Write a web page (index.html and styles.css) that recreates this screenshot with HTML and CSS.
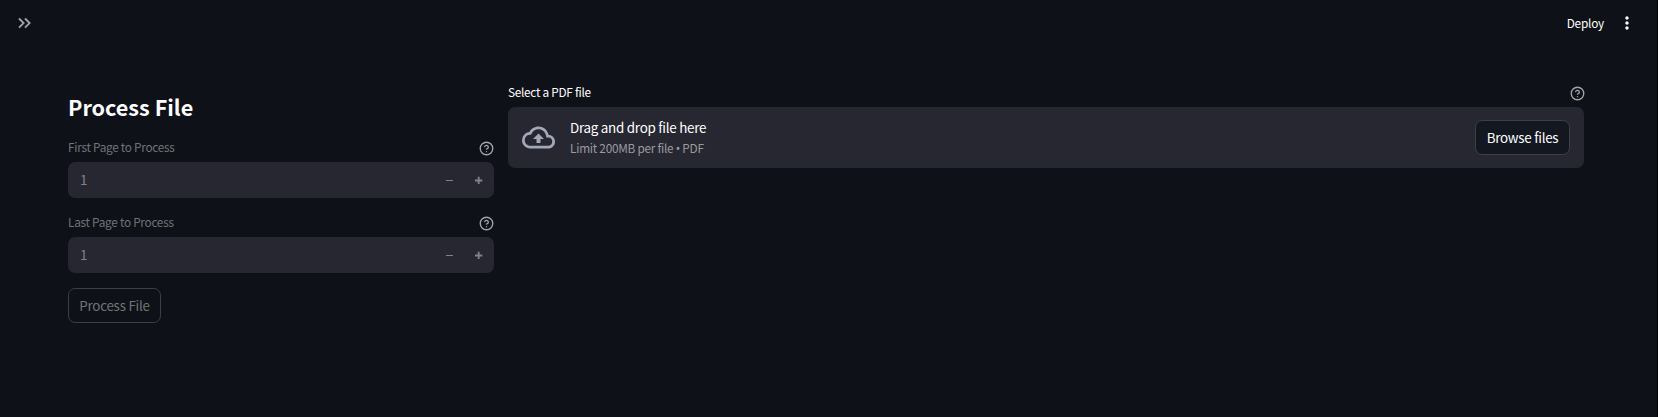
FILE: index.html
```html
<!DOCTYPE html>
<html lang="en">
<head>
<meta charset="utf-8">
<title>Process File</title>
<link rel="stylesheet" href="styles.css">
</head>
<body>
<svg class="defs" aria-hidden="true">
  <symbol id="help" viewBox="0 0 24 24"><g fill="none" stroke="currentColor" stroke-width="2.2" stroke-linecap="round" stroke-linejoin="round"><circle cx="12" cy="12" r="10"/><path d="M9.09 9a3 3 0 0 1 5.83 1c0 2-3 3-3 3M12 17h.01"/></g></symbol>
  <symbol id="minus" viewBox="0 0 8 8"><path fill="currentColor" d="M0 4v1h7V4z"/></symbol>
  <symbol id="plus" viewBox="0 0 8 8"><path fill="currentColor" d="M2.8 0.8v2.8H0v1.8h2.8v2.6h1.8V5.4h2.7V3.6H4.6V.8z"/></symbol>
</svg>
<header class="toolbar">
  <svg class="expand" viewBox="0 0 20 20"><path fill="none" stroke="currentColor" stroke-width="1.9" d="M5 5.5 9.6 10.1 5 14.7M11 5.5l4.6 4.6-4.6 4.6"/></svg>
  <div class="actions">
    <span class="deploy">Deploy</span>
    <svg class="kebab" viewBox="0 0 24 24"><path fill="currentColor" d="M12 8c1.1 0 2-.9 2-2s-.9-2-2-2-2 .9-2 2 .9 2 2 2zm0 2c-1.1 0-2 .9-2 2s.9 2 2 2 2-.9 2-2-.9-2-2-2zm0 6c-1.1 0-2 .9-2 2s.9 2 2 2 2-.9 2-2-.9-2-2-2z"/></svg>
  </div>
</header>
<main class="columns">
  <section class="settings">
    <h1 class="title">Process File</h1>
    <div class="field">
      <div class="label muted"><span>First Page to Process</span><svg class="help"><use href="#help"/></svg></div>
      <div class="number"><span class="value">1</span><svg class="step"><use href="#minus"/></svg><svg class="step"><use href="#plus"/></svg></div>
    </div>
    <div class="field">
      <div class="label muted"><span>Last Page to Process</span><svg class="help"><use href="#help"/></svg></div>
      <div class="number"><span class="value">1</span><svg class="step"><use href="#minus"/></svg><svg class="step"><use href="#plus"/></svg></div>
    </div>
    <button class="button process" disabled>Process File</button>
  </section>
  <section class="upload">
    <div class="label"><span>Select a PDF file</span><svg class="help"><use href="#help"/></svg></div>
    <div class="dropzone">
      <svg class="cloud" viewBox="0 0 24 24"><path fill="currentColor" d="M19.35 10.04A7.49 7.49 0 0 0 12 4C9.11 4 6.6 5.64 5.35 8.04A5.994 5.994 0 0 0 0 14c0 3.31 2.69 6 6 6h13c2.76 0 5-2.24 5-5 0-2.64-2.05-4.78-4.65-4.96zM19 18H6c-2.21 0-4-1.79-4-4 0-2.05 1.53-3.76 3.56-3.97l1.07-.11.5-.95A5.469 5.469 0 0 1 12 6c2.62 0 4.88 1.86 5.39 4.43l.3 1.5 1.53.11A2.98 2.98 0 0 1 22 15c0 1.65-1.35 3-3 3zM8 13h2.55v3h2.9v-3H16l-4-4z"/></svg>
      <div class="instructions"><span class="prompt">Drag and drop file here</span><span class="limit">Limit 200MB per file <span class="bullet">•</span> PDF</span></div>
      <button class="button browse">Browse files</button>
    </div>
  </section>
</main>
</body>
</html>
```

FILE: styles.css
```css
* { box-sizing: border-box; }
body {
  margin: 0;
  height: 417px;
  overflow: hidden;
  background: #0e1117;
  border-right: 1px solid #000;
  color: #fff;
  font: 13.4px/22px "Noto Sans CJK SC", "Noto Sans", sans-serif;
  letter-spacing: -0.26px;
}
.defs { display: none; }
svg { display: block; flex: none; }
.toolbar {
  display: flex;
  justify-content: space-between;
  height: 86px;
  padding: 13px 20px 0 14px;
}
.expand { width: 20px; height: 20px; color: #a3a4a7; }
.actions { display: flex; gap: 13px; height: 20px; align-items: center; }
.deploy { font-size: 11.8px; line-height: 20px; letter-spacing: -0.2px; }
.kebab { width: 20px; height: 20px; }
.columns {
  display: grid;
  grid-template-columns: 426px 1076px;
  column-gap: 14px;
  padding-left: 68px;
}
.title {
  margin: 4px 0 17px;
  font-size: 21.6px;
  line-height: 34px;
  font-weight: 700;
  letter-spacing: 0;
}
.field { margin-bottom: 18px; }
.field:nth-of-type(2) { margin-bottom: 15px; }
.label {
  display: flex;
  align-items: center;
  justify-content: space-between;
  height: 14px;
  margin-bottom: 7px;
  font-size: 11.8px;
  line-height: 14px;
  letter-spacing: -0.27px;
}
.label span { padding-bottom: 2px; }
.muted { color: #727377; }
.help { width: 15px; height: 15px; color: #a3a4a7; }
.upload .help { margin-right: -1px; }
.settings .help { margin-right: 0.4px; }
.number {
  display: flex;
  align-items: center;
  height: 36px;
  padding: 0 11px 0 12px;
  border-radius: 7.2px;
  background: #262730;
  color: #80828b;
}
.value { flex: 1; padding-bottom: 2px; }
.step { width: 8px; height: 8px; margin-left: 21px; }
.button {
  display: block;
  height: 35px;
  padding: 0 0 2px;
  border: 1px solid #3e4045;
  border-radius: 7.2px;
  background: #131720;
  color: #fff;
  font: inherit;
  letter-spacing: inherit;
}
.process { width: 93px; background: #0e1117; color: #727377; }
.dropzone {
  display: flex;
  align-items: center;
  height: 61px;
  padding: 0 14px;
  border-radius: 7.2px;
  background: #262730;
}
.cloud { width: 33px; height: 33px; color: #a3a8b8; }
.instructions { display: flex; flex-direction: column; flex: 1; margin-left: 15px; padding-bottom: 2px; }
.prompt { line-height: 22px; }
.limit { color: #9a9ba0; font-size: 11.8px; line-height: 20px; }
.bullet { font-family: "Noto Sans", sans-serif; }
.browse { width: 95px; }
```
